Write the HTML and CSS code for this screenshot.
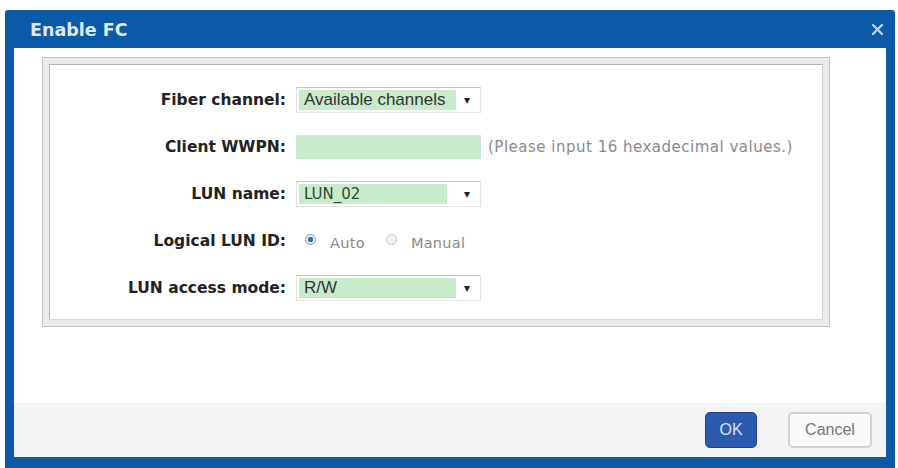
FILE: index.html
```html
<!DOCTYPE html>
<html>
<head lang="en">
  <meta charset="UTF-8">
  <title>Enable FC</title>
  <link rel="stylesheet" href="styles.css">
</head>
<body>
  <div class="dialog">
    <div class="titlebar">
      <span class="title">Enable FC</span>
      <a href="javascript:;" class="close">
        <svg width="13" height="13" viewBox="0 0 13 13"><path d="M2 2 L11 11 M11 2 L2 11" stroke="#bfcfe0" stroke-width="2.4" stroke-linecap="round"/></svg>
      </a>
    </div>
    <div class="body">
      <div class="content">
        <div class="frame">
          <div class="panel">
            <div class="row">
              <label class="lbl">Fiber channel:</label>
              <div class="select"><span class="val sans">Available channels</span><span class="arr">&#9662;</span></div>
            </div>
            <div class="row">
              <label class="lbl">Client WWPN:</label>
              <div class="input"></div>
              <span class="hint">(Please input 16 hexadecimal values.)</span>
            </div>
            <div class="row">
              <label class="lbl">LUN name:</label>
              <div class="select"><span class="val short">LUN_02</span><span class="arr">&#9662;</span></div>
            </div>
            <div class="row">
              <label class="lbl">Logical LUN ID:</label>
              <div class="radios">
                <span class="radio on"></span><span class="rtext">Auto</span>
                <span class="radio"></span><span class="rtext">Manual</span>
              </div>
            </div>
            <div class="row">
              <label class="lbl">LUN access mode:</label>
              <div class="select"><span class="val sans">R/W</span><span class="arr">&#9662;</span></div>
            </div>
          </div>
        </div>
      </div>
      <div class="footer">
        <a href="javascript:;" class="btn ok">OK</a>
        <a href="javascript:;" class="btn cancel">Cancel</a>
      </div>
    </div>
  </div>
</body>
</html>
```

FILE: styles.css
```css
/* reset */
body,
label,
div {
  margin: 0;
  padding: 0;
}

body {
  background: #fff;
  font: 16px "DejaVu Sans", Verdana, sans-serif;
  color: #222;
}

a {
  text-decoration: none;
}

.dialog {
  width: 890px;
  height: 458px;
  margin: 10px 0 0 5px;
  background: #0b59a9;
  border-radius: 3px 3px 0 0;
  padding: 0 9px 11px 9px;
  box-sizing: border-box;
  display: flex;
  flex-direction: column;
}

.titlebar {
  height: 38px;
  display: flex;
  align-items: center;
  justify-content: space-between;
  padding: 0 2px 0 16px;
}

.title {
  font-weight: bold;
  font-size: 17.5px;
  color: #dde9f4;
  margin-top: 2px;
}

.close {
  display: flex;
  margin-top: 1px;
}

.body {
  flex: 1;
  background: #fff;
  display: flex;
  flex-direction: column;
  box-shadow: inset 0 -1px 0 #9cc4ea;
}

.content {
  flex: 1;
  padding: 9px 0 0 28px;
}

.frame {
  width: 788px;
  height: 270px;
  box-sizing: border-box;
  border: 1px solid #c4c4c4;
  background: #ececec;
  padding: 6px;
}

.panel {
  height: 100%;
  box-sizing: border-box;
  background: #fff;
  border: 1px solid #b4b4b4;
  border-right-color: #d6d6d6;
  border-bottom-color: #d6d6d6;
  padding-top: 22px;
  display: flex;
  flex-direction: column;
  gap: 21px;
}

.row {
  display: flex;
  align-items: center;
  height: 26px;
}

.lbl {
  width: 236px;
  text-align: right;
  font-weight: bold;
  font-size: 15.5px;
  color: #222;
  padding-right: 10px;
}

.select {
  width: 185px;
  height: 26px;
  box-sizing: border-box;
  border: 1px solid #e2e2e2;
  border-top-color: #c6c6c6;
  padding: 2px;
  display: flex;
}

.val {
  flex: 1;
  background: #c8ebc9;
  color: #2c3a2c;
  padding-left: 5px;
  line-height: 20px;
  font-size: 15px;
}

.val.short {
  flex: none;
  width: 143px;
  color: #2d4a2d;
}

.sans {
  font-family: "Liberation Sans", Arial, sans-serif;
  font-size: 17px;
  color: #333;
}

.arr {
  width: 22px;
  margin-left: auto;
  text-align: center;
  font-size: 12px;
  line-height: 20px;
  color: #222;
}

.input {
  width: 185px;
  height: 24px;
  box-sizing: border-box;
  background: #c8ebc9;
  border-top: 1px solid #e2e2e2;
}

.hint {
  margin-left: 7px;
  font-size: 15px;
  color: #8a8a8a;
  letter-spacing: 0.5px;
}

.radios {
  display: flex;
  align-items: center;
  padding-left: 9px;
}

.radio {
  width: 11px;
  height: 11px;
  border-radius: 50%;
  border: 1px solid #c2c2c2;
  background: #f2f2f2;
  box-sizing: border-box;
  margin-top: -4px;
}

.radio.on {
  border-color: #8a9aaa;
  background: radial-gradient(circle, #3f6f9c 0, #3f6f9c 2.5px, #e6ecf2 3px);
}

.rtext {
  font-size: 14.5px;
  color: #8a8a8a;
  letter-spacing: 0.3px;
  margin: 0 21px 0 14px;
  padding-top: 4px;
}

.footer {
  height: 54px;
  background: #f4f4f4;
  display: flex;
  align-items: center;
  justify-content: flex-end;
  gap: 31px;
  padding-right: 14px;
}

.btn {
  height: 36px;
  box-sizing: border-box;
  border-radius: 5px;
  display: flex;
  align-items: center;
  justify-content: center;
  font-family: "Liberation Sans", Arial, sans-serif;
  font-size: 16px;
}

.ok {
  width: 52px;
  background: #2b5aaf;
  border: 1px solid #1d4390;
  color: #d8e4f4;
}

.cancel {
  width: 84px;
  background: #fafafa;
  border: 2px solid #d2d2d2;
  color: #777;
}
```
